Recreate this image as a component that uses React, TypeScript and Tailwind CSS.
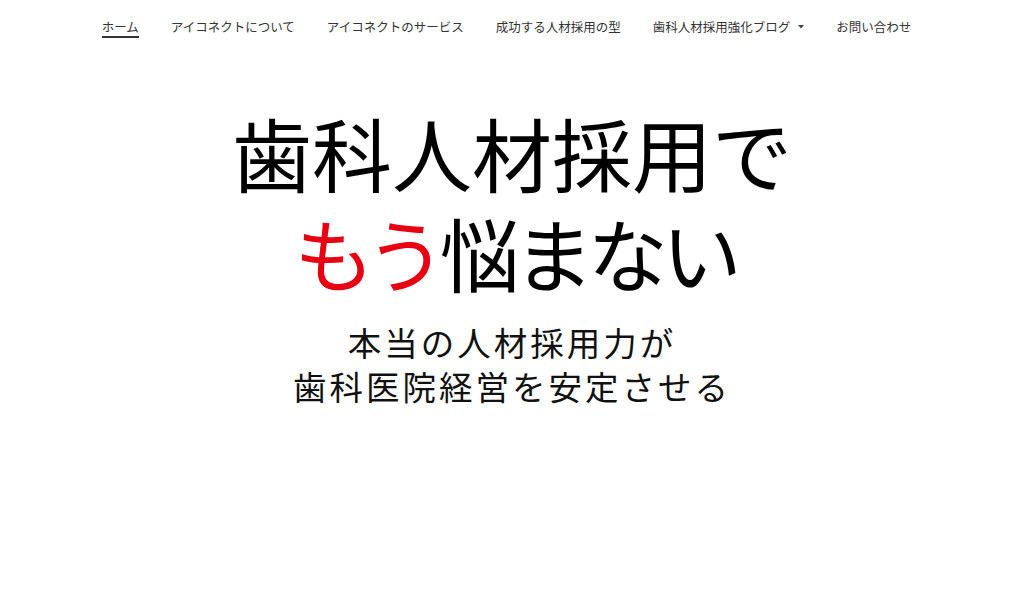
import React from "react";

const navItems = [
  "ホーム",
  "アイコネクトについて",
  "アイコネクトのサービス",
  "成功する人材採用の型",
  "歯科人材採用強化ブログ",
  "お問い合わせ",
];

export default function App() {
  return (
    <div
      className="w-full min-h-[602px] bg-white text-black"
      style={{ fontFamily: '"Noto Sans CJK JP", "Noto Sans", sans-serif' }}
    >
      <nav className="flex justify-center items-start gap-[32px] pt-[18px] pr-[11px] h-[46px] text-[12.5px] text-[#333]">
        {navItems.map((item, i) => (
          <div key={item} className="relative flex items-center">
            <span className={i === 0 ? "border-b-2 border-[#333] leading-[18px]" : "leading-[18px] pb-[2px]"}>{item}</span>
            {i === 4 && (
              <svg className="ml-[8px] mb-[2px]" width="6" height="4" viewBox="0 0 6 4">
                <path d="M0 0 L6 0 L3 3.5 Z" fill="#444" />
              </svg>
            )}
          </div>
        ))}
      </nav>
      <div className="flex flex-col items-center mt-[55px]">
        <h1 className="text-[80px] leading-[100px] font-normal text-center">
          <div>歯科人材採用で</div>
          <div className="tracking-[-6px] mr-[-6px]">
            <span className="text-[#e60012]">もう</span>悩まない
          </div>
        </h1>
        <p className="mt-[19px] text-[33.5px] leading-[44px] tracking-[3px] text-center text-[#111]">
          本当の人材採用力が
          <br />
          歯科医院経営を安定させる
        </p>
      </div>
    </div>
  );
}
